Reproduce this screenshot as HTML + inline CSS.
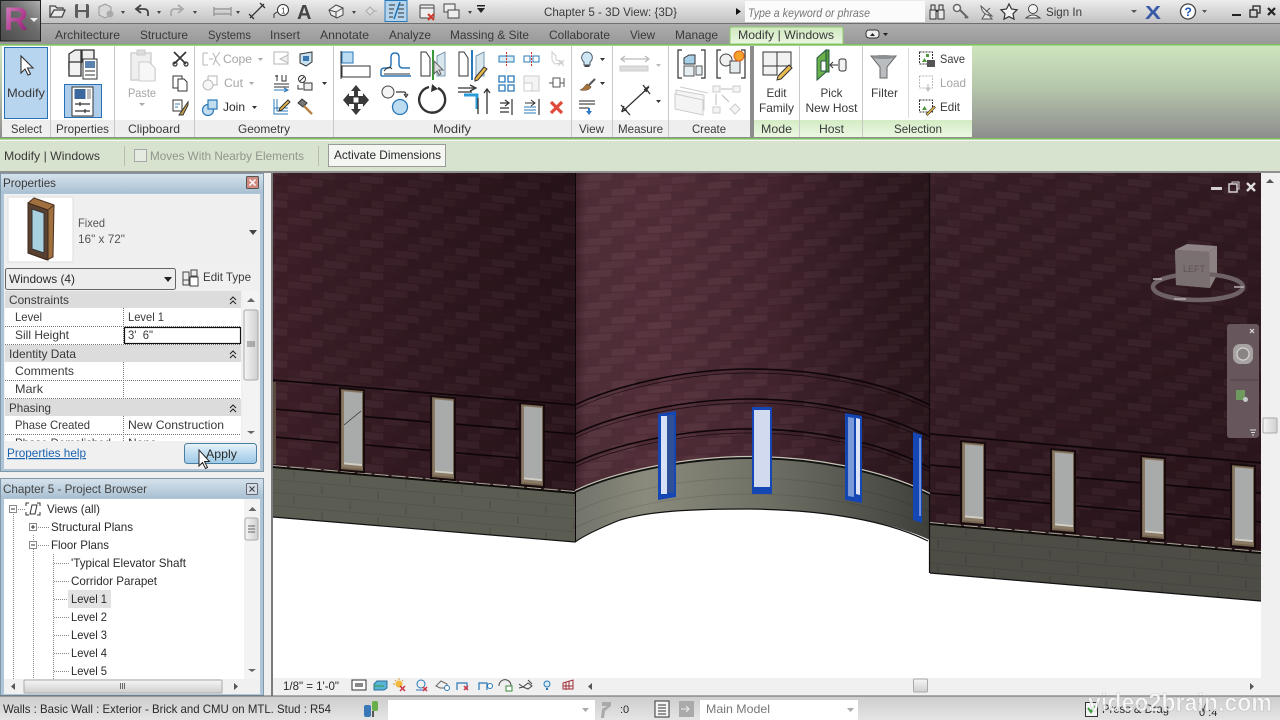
<!DOCTYPE html>
<html><head><meta charset="utf-8"><title>Revit</title>
<style>
html,body{margin:0;padding:0;background:#f0f0f0;width:1280px;height:720px;overflow:hidden}
svg{display:block;position:absolute;left:0;top:0}
text{font-family:"Liberation Sans",sans-serif;font-size:12px;fill:#3a3a3a}
.g{fill:#a5a5a5}
.m{text-anchor:middle}
.d{fill:#2a2a2a}
.q{fill:none;stroke:#b5b5b5;stroke-width:1}
</style></head><body>
<svg width="1280" height="720" viewBox="0 0 1280 720" xmlns="http://www.w3.org/2000/svg">
<defs>
<linearGradient id="gt" x1="0" y1="0" x2="0" y2="1"><stop offset="0" stop-color="#ececec"/><stop offset="1" stop-color="#c2c2c2"/></linearGradient>
<linearGradient id="gtab" x1="0" y1="0" x2="0" y2="1"><stop offset="0" stop-color="#adadad"/><stop offset="1" stop-color="#989898"/></linearGradient>
<linearGradient id="gctx" x1="0" y1="0" x2="0" y2="1"><stop offset="0" stop-color="#cfe8bf"/><stop offset="1" stop-color="#eaf6e0"/></linearGradient>
<linearGradient id="grib" x1="0" y1="0" x2="0" y2="1"><stop offset="0" stop-color="#cfe6bf"/><stop offset=".45" stop-color="#b6c7ab"/><stop offset="1" stop-color="#8c8c8c"/></linearGradient>
<linearGradient id="glab" x1="0" y1="0" x2="0" y2="1"><stop offset="0" stop-color="#ededed"/><stop offset="1" stop-color="#f0f0f0"/></linearGradient>
<linearGradient id="glabg" x1="0" y1="0" x2="0" y2="1"><stop offset="0" stop-color="#d3ecc4"/><stop offset="1" stop-color="#ecf7e3"/></linearGradient>
<linearGradient id="gpt" x1="0" y1="0" x2="0" y2="1"><stop offset="0" stop-color="#d5e2ec"/><stop offset="1" stop-color="#a9c0d2"/></linearGradient>
<linearGradient id="gapply" x1="0" y1="0" x2="0" y2="1"><stop offset="0" stop-color="#eaf4fb"/><stop offset=".5" stop-color="#bfdcf0"/><stop offset="1" stop-color="#9dc8e6"/></linearGradient>
<linearGradient id="gst" x1="0" y1="0" x2="0" y2="1"><stop offset="0" stop-color="#cdcdcd"/><stop offset="1" stop-color="#e4e4e4"/></linearGradient>
<linearGradient id="gbar" x1="0" y1="0" x2="1" y2="0"><stop offset="0" stop-color="#f5f5f5"/><stop offset="1" stop-color="#cfcfcf"/></linearGradient>
<linearGradient id="ghb" x1="0" y1="0" x2="0" y2="1"><stop offset="0" stop-color="#f5f5f5"/><stop offset="1" stop-color="#cfcfcf"/></linearGradient>
<linearGradient id="gapp" x1="0" y1="1" x2="1" y2="0"><stop offset="0" stop-color="#4a4a4a"/><stop offset=".6" stop-color="#6e6e6e"/><stop offset="1" stop-color="#b0b0b0"/></linearGradient>
<linearGradient id="gr" x1="0" y1="0" x2="1" y2="1"><stop offset="0" stop-color="#d88cc4"/><stop offset=".6" stop-color="#b03c90"/><stop offset="1" stop-color="#7c2068"/></linearGradient>
<linearGradient id="gcurve" x1="575" y1="0" x2="930" y2="0" gradientUnits="userSpaceOnUse"><stop offset="0" stop-color="#3e2029"/><stop offset=".03" stop-color="#52303a"/><stop offset=".22" stop-color="#55303b"/><stop offset=".5" stop-color="#482832"/><stop offset=".8" stop-color="#341b24"/><stop offset="1" stop-color="#2a161c"/></linearGradient>
<linearGradient id="gcbase" x1="575" y1="0" x2="930" y2="0" gradientUnits="userSpaceOnUse"><stop offset="0" stop-color="#72736a"/><stop offset=".2" stop-color="#8a8b7c"/><stop offset=".55" stop-color="#6e6f64"/><stop offset="1" stop-color="#3f403a"/></linearGradient>
<linearGradient id="gleft" x1="273" y1="0" x2="575" y2="0" gradientUnits="userSpaceOnUse"><stop offset="0" stop-color="#3e2029"/><stop offset="1" stop-color="#28131a"/></linearGradient>
<linearGradient id="gright" x1="930" y1="173" x2="1261" y2="540" gradientUnits="userSpaceOnUse"><stop offset="0" stop-color="#3b2029"/><stop offset="1" stop-color="#2a141b"/></linearGradient>
<g id="bk">
<rect x="0" y="0" width="23" height="7" fill="#fff" opacity=".025"/>
<rect x="24" y="0" width="23" height="7" fill="#000" opacity=".07"/>
<rect x="48" y="0" width="23" height="7" fill="#fff" opacity=".015"/>
<rect x="72" y="0" width="23" height="7" fill="#000" opacity=".04"/>
<rect x="12" y="8" width="23" height="7" fill="#000" opacity=".05"/>
<rect x="36" y="8" width="23" height="7" fill="#fff" opacity=".03"/>
<rect x="60" y="8" width="23" height="7" fill="#000" opacity=".08"/>
<rect x="84" y="8" width="12" height="7" fill="#fff" opacity=".02"/>
<rect x="0" y="16" width="23" height="7" fill="#000" opacity=".06"/>
<rect x="24" y="16" width="23" height="7" fill="#fff" opacity=".02"/>
<rect x="48" y="16" width="23" height="7" fill="#000" opacity=".04"/>
<rect x="72" y="16" width="23" height="7" fill="#fff" opacity=".035"/>
<rect x="12" y="24" width="23" height="7" fill="#fff" opacity=".03"/>
<rect x="36" y="24" width="23" height="7" fill="#000" opacity=".06"/>
<rect x="60" y="24" width="23" height="7" fill="#fff" opacity=".02"/>
<rect x="84" y="24" width="12" height="7" fill="#000" opacity=".05"/>
<path d="M0 7.500H96M0 15.500H96M0 23.500H96M0 31.500H96" stroke="#000" stroke-opacity=".08"/>
</g>
<pattern id="brick" width="96" height="32" patternUnits="userSpaceOnUse" patternTransform="skewY(5)"><use href="#bk"/></pattern>
<pattern id="brick2" width="96" height="32" patternUnits="userSpaceOnUse" patternTransform="skewY(-4)"><use href="#bk"/></pattern>
<pattern id="cmu" width="56" height="26" patternUnits="userSpaceOnUse" patternTransform="skewY(5)">
<path d="M0 .5H56M0 13.5H56" stroke="#000" stroke-opacity=".1" fill="none"/>
<path d="M14 3V11M42 16V24" stroke="#000" stroke-opacity=".18" fill="none"/>
</pattern>
<g id="win">
<rect x="0" y="0" width="26" height="84" fill="#170a0d"/>
<rect x="2" y="2" width="22" height="80" fill="#75644f"/>
<rect x="3" y="3" width="20" height="77" fill="#8a7a66"/>
<rect x="5" y="4" width="18" height="71" fill="#a9aaaa"/>
<rect x="5" y="75" width="18" height="2" fill="#d0d0c8"/>
</g>
<clipPath id="tb"><rect x="5" y="434" width="236" height="7"/></clipPath>
</defs>

<rect width="1280" height="720" fill="#f0f0f0"/>

<!-- TITLE BAR -->
<rect width="1280" height="23" fill="url(#gt)"/>
<rect y="23" width="1280" height="1" fill="#6f6f6f"/>
<rect y="24" width="1280" height="20" fill="url(#gtab)"/>

<!-- Tabs -->
<path d="M730 44V29q0-2 2-2H841q2 0 2 2V44Z" fill="url(#gctx)" stroke="#8fcc6e"/>
<text x="55" y="39" textLength="65" lengthAdjust="spacingAndGlyphs">Architecture</text>
<text x="140" y="39" textLength="48" lengthAdjust="spacingAndGlyphs">Structure</text>
<text x="208" y="39" textLength="43" lengthAdjust="spacingAndGlyphs">Systems</text>
<text x="270" y="39" textLength="30" lengthAdjust="spacingAndGlyphs">Insert</text>
<text x="320" y="39" textLength="49" lengthAdjust="spacingAndGlyphs">Annotate</text>
<text x="389" y="39" textLength="42" lengthAdjust="spacingAndGlyphs">Analyze</text>
<text x="450" y="39" textLength="79" lengthAdjust="spacingAndGlyphs">Massing &amp; Site</text>
<text x="549" y="39" textLength="61" lengthAdjust="spacingAndGlyphs">Collaborate</text>
<text x="630" y="39" textLength="25" lengthAdjust="spacingAndGlyphs">View</text>
<text x="675" y="39" textLength="43" lengthAdjust="spacingAndGlyphs">Manage</text>
<text x="738" y="39" textLength="96" lengthAdjust="spacingAndGlyphs">Modify | Windows</text>
<rect x="866" y="30" width="13" height="8" rx="3" fill="#eee" stroke="#333"/><path d="M870 36l2.500-3 2.500 3z" fill="#222"/><path d="M883 33h5l-2.500 3z" fill="#222"/>

<!-- Title -->
<text x="544" y="16" textLength="133" lengthAdjust="spacingAndGlyphs">Chapter 5 - 3D View: {3D}</text>
<path d="M736 8v7l5-3.500z" fill="#111"/>
<rect x="745" y="1" width="180" height="21" fill="#fbfbfb"/>
<text x="748" y="17" font-style="italic" style="fill:#777" textLength="122" lengthAdjust="spacingAndGlyphs">Type a keyword or phrase</text>

<!-- App button -->
<rect x="0.500" y="0.500" width="40" height="40.500" fill="url(#gapp)" stroke="#222"/>
<text x="4" y="30" style="font-size:32px;font-weight:bold;font-family:'Liberation Sans',sans-serif;fill:url(#gr)" textLength="24" lengthAdjust="spacingAndGlyphs">R</text>
<path d="M30 18h8l-4 4z" fill="#eee"/>

<!-- QAT icons -->
<path d="M50 17V6h5l2 2h6v2M50 17l4-7h11l-3 7Z" fill="#e8e8e8" stroke="#444" stroke-width="1.300"/>
<rect x="75" y="4" width="14" height="14" rx="2" fill="#5c5c5c"/><rect x="78" y="4" width="8" height="6" fill="#ddd"/><rect x="78" y="12" width="8" height="6" fill="#ccc"/>
<path d="M99 7l6-3 6 3v8l-6 3-6-3z" fill="#d8d8d8" stroke="#999"/><circle cx="110" cy="14" r="3.500" fill="#aaa"/>
<path d="M121 11h4l-2 3z M157 11h4l-2 3z M193 11h4l-2 3z M236 11h4l-2 3z M352 11h4l-2 3z" fill="#444"/>
<path d="M148 16v-3q0-4-4-4h-7M141 5l-5 4 5 4" fill="none" stroke="#444" stroke-width="1.800"/>
<path d="M171 16v-3q0-4 4-4h7M178 5l5 4-5 4" fill="none" stroke="#aaa" stroke-width="1.800"/>
<path d="M214 7v9M231 7v9M214 9h17M214 14h17" stroke="#999" stroke-width="1.500" fill="none"/><rect x="216" y="11" width="13" height="2" fill="#ccc"/>
<path d="M250 18l14-14M249 14l5 5M260 3l5 5" stroke="#333" stroke-width="1.300" fill="none"/>
<path d="M274 18v-4l5-3" stroke="#333" fill="none"/><circle cx="283" cy="10" r="5.500" fill="#fff" stroke="#333"/><text x="281" y="13.500" style="font-size:8px">1</text>
<text x="297" y="19" style="font-size:20px;font-weight:bold;fill:#444">A</text>
<path d="M329 10l7-5 7 3v7l-6 3-6-3z" fill="#eee" stroke="#444"/>
<path d="M329 10l7 2 7-4M336 12v6" stroke="#444" fill="none"/>
<path d="M366 11l4-4 4 4-4 4z" fill="#ddd" stroke="#aaa"/><path d="M374 11h3" stroke="#aaa"/>
<rect x="385" y="0.500" width="22" height="21" fill="#b4d3ed" stroke="#2a78b8"/>
<path d="M389 5h6M389 9h5M389 13h4M389 17h4M398 5h6M398 9h6M398 13h6M398 17h6" stroke="#333"/><path d="M394 19l6-17" stroke="#1a6fb0" stroke-width="1.400"/>
<rect x="420" y="5" width="14" height="13" rx="1" fill="#eee" stroke="#444"/><path d="M420 8h14" stroke="#444"/><path d="M428 14l6 6M434 14l-6 6" stroke="#d0382a" stroke-width="2"/>
<rect x="444" y="4" width="11" height="8" fill="#eee" stroke="#444"/><rect x="448" y="10" width="11" height="8" fill="#eee" stroke="#444"/><path d="M468 11h4l-2 3z" fill="#444"/>
<path d="M477 5h8v1.500h-8zM477 8h8l-4 5z" fill="#222"/>

<!-- Right title icons -->
<rect x="931" y="5" width="4" height="5" fill="#ddd" stroke="#333"/><rect x="939" y="5" width="4" height="5" fill="#ddd" stroke="#333"/>
<path d="M930 10h6v9h-6zM938 10h6v9h-6z" fill="#e8e8e8" stroke="#333"/><path d="M936 11h2" stroke="#333" stroke-width="2"/>
<circle cx="957" cy="8" r="3.500" fill="#eee" stroke="#666" stroke-width="1.500"/><path d="M960 10l8 8M965 18l2-2" stroke="#666" stroke-width="2"/>
<path d="M981 6q1 9 11 10zM986 12l4-4M985 14l-3 5h10l-4-5" fill="#e4e4e4" stroke="#555"/>
<path d="M1009 4l2.500 5 5.500.8-4 3.900 1 5.500-5-2.600-5 2.600 1-5.500-4-3.900 5.500-.8z" fill="#f2f2f2" stroke="#333" stroke-width="1.200"/>
<circle cx="1033" cy="9" r="4.500" fill="#f2f2f2" stroke="#444"/><path d="M1026 18q7-6 14 0z" fill="#f2f2f2" stroke="#444"/>
<text x="1046" y="16" textLength="36" lengthAdjust="spacingAndGlyphs">Sign In</text>
<path d="M1131 10h6l-3 3z" fill="#555"/>
<text x="1145" y="19" style="font-size:18px;font-weight:bold;fill:#3a5aa8" textLength="16" lengthAdjust="spacingAndGlyphs">X</text>
<circle cx="1188" cy="11.500" r="7.500" fill="#fff" stroke="#444" stroke-width="1.300"/>
<text x="1184.500" y="16" style="font-size:12px;font-weight:bold;fill:#1a55b0">?</text>
<path d="M1202 10h5l-2.500 3z" fill="#555"/>
<rect x="1232" y="14" width="9" height="2" fill="#222"/>
<rect x="1250" y="10" width="7" height="7" fill="none" stroke="#222" stroke-width="1.300"/><path d="M1253 10V6h7v7h-3" fill="none" stroke="#222" stroke-width="1.300"/>
<path d="M1268 8l7 7M1275 8l-7 7" stroke="#222" stroke-width="2.200"/>

<!-- RIBBON -->
<rect x="0" y="44" width="1280" height="95" fill="url(#grib)"/>
<rect x="0" y="44" width="1280" height="1.500" fill="#7cc15c"/>
<rect x="2" y="46" width="748" height="74" fill="#fff"/>
<rect x="2" y="120" width="748" height="17" fill="url(#glab)"/>
<rect x="750" y="46" width="4" height="91" fill="#8c8c8c"/>
<rect x="754" y="46" width="218" height="74" fill="#fff"/>
<rect x="754" y="120" width="218" height="17" fill="url(#glabg)"/>
<rect x="0" y="138" width="1280" height="1.500" fill="#7cc15c"/>
<path d="M50.500 46V137M114.500 46V137M194.500 46V137M333.500 46V137M571.500 46V137M612.500 46V137M668.500 46V137M799.500 46V137M862.500 46V137" stroke="#c8c8c8"/>
<path d="M908.500 48V118" stroke="#ddd"/>

<!-- panel labels -->
<text x="26.500" y="133" class="m" textLength="31" lengthAdjust="spacingAndGlyphs">Select</text>
<text x="82.500" y="133" class="m" textLength="53" lengthAdjust="spacingAndGlyphs">Properties</text>
<text x="154" y="133" class="m" textLength="52" lengthAdjust="spacingAndGlyphs">Clipboard</text>
<text x="264" y="133" class="m" textLength="52" lengthAdjust="spacingAndGlyphs">Geometry</text>
<text x="452" y="133" class="m" textLength="38" lengthAdjust="spacingAndGlyphs">Modify</text>
<text x="591.500" y="133" class="m" textLength="25" lengthAdjust="spacingAndGlyphs">View</text>
<text x="640.500" y="133" class="m" textLength="45" lengthAdjust="spacingAndGlyphs">Measure</text>
<text x="709" y="133" class="m" textLength="34" lengthAdjust="spacingAndGlyphs">Create</text>
<text x="776.500" y="133" class="m" textLength="31" lengthAdjust="spacingAndGlyphs">Mode</text>
<text x="831.500" y="133" class="m" textLength="25" lengthAdjust="spacingAndGlyphs">Host</text>
<text x="918" y="133" class="m" textLength="48" lengthAdjust="spacingAndGlyphs">Selection</text>

<!-- Select -->
<rect x="4.500" y="47.500" width="43" height="71" fill="#b8d5ef" stroke="#2a70b5"/>
<path d="M21 56v17l4-4 3 6 2.500-1-3-6h5.500z" fill="#fff" stroke="#333" stroke-width="1.100"/>
<text x="7" y="97" textLength="38" lengthAdjust="spacingAndGlyphs">Modify</text>

<!-- Properties icons -->
<path d="M69 54l6-4h6v14h-6l-6 4z M82 50h12v12h-12z" fill="#eee" stroke="#333" stroke-width="1.300"/>
<path d="M69 62h12v14H69z" fill="#f3f3f3" stroke="#333" stroke-width="1.300"/>
<rect x="83" y="59" width="14" height="20" fill="#fff" stroke="#333"/><rect x="85" y="61" width="10" height="7" fill="#5b83b0"/><path d="M85 71h10M85 75h10" stroke="#333"/>
<rect x="64.500" y="84.500" width="37" height="33" fill="#aecdea" stroke="#2a70b5"/>
<rect x="72" y="87" width="21" height="29" fill="#fff" stroke="#333"/><rect x="74.500" y="89" width="11" height="10" fill="#3a689c"/><rect x="87" y="89" width="4" height="10" fill="#bbb"/>
<path d="M75 104h15M75 111h15M80 102v4M85 109v4" stroke="#333" stroke-width="1.200"/>

<!-- Clipboard -->
<path d="M131 53h20v12l4 4v11h-24z" fill="#efefef" stroke="#d0d0d0" stroke-width="1.500"/><rect x="137" y="50" width="8" height="5" fill="#ddd" stroke="#ccc"/><path d="M139 62h10l6 6v13h-16z" fill="#f7f7f7" stroke="#ccc"/>
<text x="128" y="97" class="g" textLength="28" lengthAdjust="spacingAndGlyphs">Paste</text>
<path d="M139 103h6l-3 3z" fill="#aaa"/>
<path d="M174 52l12 12M186 52l-12 12" stroke="#333" stroke-width="1.600"/><circle cx="175" cy="64" r="2" fill="none" stroke="#333" stroke-width="1.200"/><circle cx="186" cy="64" r="2" fill="none" stroke="#333" stroke-width="1.200"/>
<rect x="173" y="76" width="9" height="12" fill="#fff" stroke="#333"/><path d="M178 79h6l3 3v9h-9z" fill="#fff" stroke="#333"/>
<rect x="173" y="100" width="9" height="11" fill="#fff" stroke="#333"/><path d="M175 104h5M175 107h3" stroke="#3a78b0"/><path d="M179 115l9-13 0 3-5 10z" fill="#c8a04a" stroke="#333"/>

<!-- Geometry -->
<path d="M203 53v12M203 53h5M203 65h5M209 59h4M213 53l3 6-3 6M220 52l-5 7 5 7" class="q"/>
<text x="223" y="63" class="g" textLength="29" lengthAdjust="spacingAndGlyphs">Cope</text><path d="M258 58h5l-2.500 3z" fill="#aaa"/>
<circle cx="208" cy="85" r="5" fill="#f6f6f6" stroke="#bbb"/><path d="M208 76h9v9h-4" class="q"/><path d="M208 80v-4" class="q"/>
<text x="224" y="87" class="g" textLength="19" lengthAdjust="spacingAndGlyphs">Cut</text><path d="M249 82h5l-2.500 3z" fill="#aaa"/>
<circle cx="208" cy="110" r="5.500" fill="#c2ddf0" stroke="#2a78b8" stroke-width="1.200"/><rect x="208" y="100" width="9" height="9" fill="#c2ddf0" stroke="#2a78b8" stroke-width="1.200"/>
<text x="223" y="111" class="d" textLength="22" lengthAdjust="spacingAndGlyphs">Join</text><path d="M252 106h5l-2.500 3z" fill="#333"/>
<path d="M274 52h14v12h-14z" class="q"/><path d="M288 55l-8 4 8 4z" fill="#eee" stroke="#bbb"/>
<path d="M300 54l12-2v10l-6 4-6-3z" fill="#c9e0f0" stroke="#333"/><rect x="303" y="56" width="6" height="5" fill="#3a78b0"/>
<path d="M275 76h3M277 75v6M282 75v6h4v-6M286 75v6M274 84h15M274 87h15" stroke="#333" fill="none"/><path d="M274 90h14M284 88l4 2-4 2" stroke="#2a78b8" fill="none"/>
<circle cx="302" cy="79" r="3.500" fill="none" stroke="#333"/><path d="M300 81l4-4" stroke="#333"/><rect x="304" y="83" width="8" height="7" fill="#eee" stroke="#333"/><path d="M298 85v4h5" fill="none" stroke="#333"/><path d="M322 82h5l-2.500 3z" fill="#333"/>
<path d="M274 99v15h14M277 99v12h11M274 108h14" stroke="#2a78b8" fill="none"/><path d="M280 108l8-8 2 2-8 8-3 1z" fill="#e8b94a" stroke="#333"/>
<path d="M298 103l4-4 5 4-4 4z" fill="#777" stroke="#333"/><path d="M304 106l8 8" stroke="#b8834a" stroke-width="2.500"/>

<!-- Modify panel -->
<rect x="342" y="52" width="11" height="11" fill="#bcdcf2" stroke="#2a78b8"/><rect x="342" y="66" width="28" height="11" fill="#fff" stroke="#333"/><path d="M341 51v28" stroke="#333"/>
<path d="M381 76v-5q0-3 4-3h3q3 0 3-4v-7q0-4 4-4t4 4v7q0 4 4 4h7M381 76h30" fill="none" stroke="#2a78b8" stroke-width="1.500"/><path d="M384 74h26M384 71q5-6 8-2" fill="none" stroke="#333"/>
<path d="M421 52h5l4 6v18h-9z" fill="#fff" stroke="#333"/><path d="M433 50v30" stroke="#3a9a3a" stroke-width="2"/><path d="M437 56l8-4v24h-8z" fill="#d8e6ee" stroke="#7a9ab0"/>
<path d="M434 61v13l3-3 2 4 2-1-2-4h4z" fill="#ddd" stroke="#666"/>
<path d="M459 52h5l4 6v18h-9z" fill="#fff" stroke="#333"/><path d="M472 50v30" stroke="#2a78b8" stroke-width="2"/><path d="M476 56l8-4v24h-8z" fill="#d8e6ee" stroke="#7a9ab0"/><path d="M475 78l9-11 3 2-9 11-3 1z" fill="#e8b94a" stroke="#333"/>
<path d="M356 85l5 6h-3v5h5v-3l6 7-6 7v-3h-5v5h3l-5 6-5-6h3v-5h-5v3l-6-7 6-7v3h5v-5h-3z" fill="#3a3a3a"/><rect x="353" y="97" width="6" height="6" fill="#fff" stroke="#333"/>
<circle cx="388" cy="92" r="6" fill="#f4f4f4" stroke="#444"/><circle cx="400" cy="107" r="7.500" fill="#bcdcf2" stroke="#2a78b8" stroke-width="1.300"/><path d="M396 92h8q2 0 2 3M404 94l2 3 2-3" fill="none" stroke="#333" stroke-width="1.200"/>
<path d="M429 87a13 13 0 1 0 9 1" fill="none" stroke="#333" stroke-width="2.400"/><path d="M432 84l6 5-7 3z" fill="#333"/>
<path d="M458 88h16M458 92h14M470 85l6 3-6 3" fill="none" stroke="#333" stroke-width="1.300"/><path d="M464 95h13v14" fill="none" stroke="#2a9ad8" stroke-width="3"/><path d="M478 114V98M487 114V90M484 93l3-4 3 4" fill="none" stroke="#333" stroke-width="1.300"/>
<path d="M499 56h15v6h-15z" fill="#d8ecf8" stroke="#2a78b8"/><path d="M506.500 52v14" stroke="#c33" stroke-dasharray="2 1"/>
<rect x="524" y="56" width="6" height="6" fill="#fff" stroke="#2a78b8"/><rect x="533" y="56" width="6" height="6" fill="#fff" stroke="#2a78b8"/><path d="M531.500 52v14" stroke="#c33" stroke-dasharray="2 1"/>
<path d="M552 52l4 4v4l5 1 2 2-8 1-3-4zM558 60l6 6M564 60l-6 6" fill="none" stroke="#ccc"/>
<path d="M499 76h6v6h-6zM508 76h6v6h-6zM499 85h6v6h-6zM508 85h6v6h-6z" fill="#fff" stroke="#2a78b8" stroke-width="1.300"/>
<rect x="524" y="76" width="15" height="15" fill="#f4f4f4" stroke="#ccc"/><rect x="524" y="83" width="8" height="8" fill="#fff" stroke="#ccc"/>
<rect x="553" y="78" width="7" height="9" fill="#fff" stroke="#555"/><path d="M549 83h4M560 83h4M564 78v9" stroke="#555"/>
<path d="M500 103h9M505 100l4 3-4 3M500 108h9M500 112h9M512 99v16" fill="none" stroke="#333" stroke-width="1.200"/>
<path d="M525 103h10M531 100l4 3-4 3" fill="none" stroke="#333"/><path d="M524 107h12M524 110h12M524 113h12" stroke="#2a78b8"/><path d="M539 99v16" stroke="#333" stroke-width="1.200"/>
<path d="M551 102l11 11M562 102l-11 11" stroke="#e04a3a" stroke-width="3.200"/>

<!-- View -->
<path d="M587 52a5.500 5.500 0 0 1 3 10v3h-6v-3a5.500 5.500 0 0 1 3-10z" fill="#cfe6f5" stroke="#456"/><rect x="584.500" y="65" width="5" height="2" fill="#444"/>
<path d="M600 58h5l-2.500 3z M600 82h5l-2.500 3z" fill="#333"/>
<path d="M580 90c4-1 5-5 7-6l4 3c-2 3-5 4-11 3z" fill="#a8763e" stroke="#5a3a1a" stroke-width=".6"/><path d="M589 85l6-6" stroke="#555" stroke-width="2"/>
<path d="M579 101h16M579 104h16M579 108h10" stroke="#222"/><path d="M588 108v3h-2l3 4 3-4h-2v-3z" fill="#2a78c8"/>

<!-- Measure -->
<path d="M621 59h28M625 56l-4 3 4 3M645 56l4 3-4 3" fill="none" stroke="#bbb" stroke-width="1.200"/><rect x="620" y="66" width="28" height="5" fill="#ddd" stroke="#ccc"/><path d="M656 64h5l-2.500 3z" fill="#bbb"/>
<path d="M622 112l27-25M621 105l9 10M643 85l7 9M624 106l-2 5 5-1M644 90l4-3-2 5" fill="none" stroke="#333" stroke-width="1.300"/><path d="M656 100h5l-2.500 3z" fill="#333"/>

<!-- Create -->
<path d="M682 50h-4v28h4M701 50h4v28h-4" fill="none" stroke="#333" stroke-width="1.200"/>
<path d="M684 58l5-3h6v9h-11z" fill="#a8d0ea" stroke="#333"/><rect x="684" y="66" width="10" height="10" fill="#e6eef2" stroke="#555"/><rect x="696" y="66" width="6" height="9" fill="#e6eef2" stroke="#555"/>
<path d="M721 50h-4v28h4M741 50h4v28h-4" fill="none" stroke="#333" stroke-width="1.200"/><circle cx="726" cy="60" r="6" fill="#f0f0f0" stroke="#444"/><rect x="730" y="61" width="10" height="12" fill="#e4e9ec" stroke="#444"/><circle cx="739" cy="56" r="5" fill="#f5a32a" stroke="#e25a1a"/>
<path d="M676 90l28 5v15l-28-6zM680 87l28 6" fill="#f4f4f4" stroke="#ccc"/><path d="M675 94l28 6v15l-28-6z" fill="#f4f4f4" stroke="#ccc"/>
<path d="M713 86h7v6h-7zM733 86h7v6h-7zM713 107h7v6h-7zM735 104l5 5-5 5-5-5z" fill="#f4f4f4" stroke="#ccc"/><path d="M721 89h11M716 94v11M722 95l7 7" stroke="#bbb"/>

<!-- Edit Family -->
<rect x="763" y="52" width="14" height="23" fill="#f2f2f2" stroke="#333"/><rect x="777" y="52" width="14" height="14" fill="#f2f2f2" stroke="#333"/><path d="M763 66h14" stroke="#333"/><path d="M778 76l11-11 3 3-11 11-4 1z" fill="#eabc52" stroke="#333"/>
<text x="776.500" y="97" class="m" textLength="20" lengthAdjust="spacingAndGlyphs">Edit</text>
<text x="776.500" y="112" class="m" textLength="35" lengthAdjust="spacingAndGlyphs">Family</text>
<!-- Pick New Host -->
<path d="M817 58l9-8v22l-9 8z" fill="#6bb04a" stroke="#254"/><path d="M826 50h3v22h-3z" fill="#5a9a3c" stroke="#254"/><rect x="821" y="61" width="5" height="10" fill="#fff" stroke="#254"/>
<path d="M831 65h7M833 62l-3 3 3 3" fill="none" stroke="#333"/><rect x="839" y="59" width="7" height="12" rx="2" fill="#f2f2f2" stroke="#333"/>
<text x="831.500" y="97" class="m" textLength="22" lengthAdjust="spacingAndGlyphs">Pick</text>
<text x="831.500" y="112" class="m" textLength="52" lengthAdjust="spacingAndGlyphs">New Host</text>
<!-- Filter -->
<path d="M871 56h25l-9 11v11h-7V67z" fill="#b9bdc0" stroke="#666"/><ellipse cx="883.500" cy="57" rx="12" ry="2" fill="#8a8e90"/>
<text x="871" y="97" textLength="27" lengthAdjust="spacingAndGlyphs">Filter</text>
<!-- Selection -->
<rect x="919.500" y="52" width="13" height="12" fill="#fff" stroke="#333" stroke-dasharray="2 1"/><path d="M922 62l2.500-4 2.500 4z" fill="#4a9a3a"/><rect x="926" y="54" width="3" height="3" fill="#4a9a3a"/><rect x="927" y="60" width="8" height="7" fill="#555"/>
<text x="940" y="63" textLength="25" lengthAdjust="spacingAndGlyphs">Save</text>
<rect x="919.500" y="76" width="13" height="12" fill="#fff" stroke="#bbb" stroke-dasharray="2 1"/><path d="M928 84v6M926 88l2 3 2-3" stroke="#bbb" fill="none"/>
<text x="940" y="87" class="g" textLength="26" lengthAdjust="spacingAndGlyphs">Load</text>
<rect x="919.500" y="100" width="13" height="12" fill="#fff" stroke="#333" stroke-dasharray="2 1"/><path d="M922 110l2.500-4 2.500 4z" fill="#4a9a3a"/><path d="M926 114l8-8 1.500 1.500-8 8z" fill="#e8b94a" stroke="#333" stroke-width=".6"/>
<text x="940" y="111" textLength="20" lengthAdjust="spacingAndGlyphs">Edit</text>

<!-- Options bar -->
<rect x="0" y="140" width="1280" height="1" fill="#f6f6f6"/>
<rect x="0" y="141" width="1280" height="30" fill="#d8e3cf"/>
<rect x="0" y="171" width="1280" height="2" fill="#8f8f8f"/>
<text x="4" y="160" textLength="96" lengthAdjust="spacingAndGlyphs">Modify | Windows</text>
<path d="M124.500 146v20M318.500 146v20" stroke="#b4bdae"/>
<rect x="134.500" y="149.500" width="12" height="12" fill="#e6ebe2" stroke="#a8a8a8"/>
<text x="150" y="160" style="fill:#8f958c" textLength="154" lengthAdjust="spacingAndGlyphs">Moves With Nearby Elements</text>
<rect x="328.500" y="144.500" width="117" height="22" fill="#f4f6f2" stroke="#9a9a9a"/>
<text x="334" y="159" class="d" textLength="107" lengthAdjust="spacingAndGlyphs">Activate Dimensions</text>

<!-- Left column -->
<rect x="0" y="173" width="272" height="523" fill="#f0f0f0"/>

<!-- PROPERTIES -->
<rect x="0.500" y="173.500" width="263" height="298" fill="#aec5d7" stroke="#7f98aa"/>
<rect x="1" y="174" width="262" height="19" fill="url(#gpt)"/>
<text x="3" y="187" textLength="53" lengthAdjust="spacingAndGlyphs">Properties</text>
<rect x="246.500" y="176.500" width="12" height="12" rx="1" fill="#d08a80" stroke="#555"/><path d="M249.500 179.500l6 6M255.500 179.500l-6 6" stroke="#fff" stroke-width="1.500"/>
<rect x="4" y="194" width="256" height="275" fill="#f0f0f0"/>
<rect x="5" y="195" width="254" height="69" fill="#efefef"/>
<rect x="8" y="197" width="65" height="65" fill="#fff" stroke="#ddd"/>
<path d="M28 203l6-5 20 7-1 52-6 3-19-7z" fill="#a0703f" stroke="#4a3020"/>
<path d="M28 203l20 7v50l-20-7z" fill="#5a4030" stroke="#3a2818"/>
<path d="M32 209l12 4v40l-12-4z" fill="#a9d0e0" stroke="#333"/>
<path d="M48 210l6-5" stroke="#4a3020"/>
<text x="78" y="227" textLength="27" lengthAdjust="spacingAndGlyphs" style="fill:#555">Fixed</text>
<text x="78" y="243" textLength="47" lengthAdjust="spacingAndGlyphs" style="fill:#555">16" x 72"</text>
<path d="M249 230h8l-4 5z" fill="#444"/>
<rect x="5.500" y="268.500" width="170" height="21" rx="2" fill="#ededed" stroke="#666"/>
<text x="9" y="283" class="d" textLength="66" lengthAdjust="spacingAndGlyphs">Windows (4)</text>
<path d="M164 277h8l-4 5z" fill="#222"/>
<path d="M183 272h6v8h-6zM191 270h6v6h-6zM183 280h6v5h-6z" fill="#eee" stroke="#444"/><rect x="190" y="277" width="8" height="9" fill="#fff" stroke="#444"/>
<text x="203" y="281" textLength="48" lengthAdjust="spacingAndGlyphs">Edit Type</text>

<!-- property table -->
<rect x="5" y="291" width="236" height="150" fill="#fff"/>
<rect x="5" y="291" width="236" height="17" fill="#dcdcdc"/>
<rect x="5" y="345" width="236" height="17" fill="#dcdcdc"/>
<rect x="5" y="399" width="236" height="17" fill="#dcdcdc"/>
<path d="M5 326.500H241M5 344.500H241M5 380.500H241M5 398.500H241M5 434.500H241M123.500 308V344M123.500 362V398M123.500 416V441" stroke="#777" stroke-dasharray="1 1"/>
<text x="9" y="304" textLength="60" lengthAdjust="spacingAndGlyphs">Constraints</text>
<text x="15" y="321" textLength="27" lengthAdjust="spacingAndGlyphs">Level</text>
<text x="128" y="321" textLength="36" lengthAdjust="spacingAndGlyphs">Level 1</text>
<text x="15" y="339" textLength="54" lengthAdjust="spacingAndGlyphs">Sill Height</text>
<rect x="124.500" y="327.500" width="116" height="16" fill="#fff" stroke="#111" stroke-width="1.200"/>
<text x="128" y="339" textLength="25" lengthAdjust="spacingAndGlyphs">3'&#160;&#160;6"</text>
<text x="9" y="358" textLength="67" lengthAdjust="spacingAndGlyphs">Identity Data</text>
<text x="15" y="375" textLength="59" lengthAdjust="spacingAndGlyphs">Comments</text>
<text x="15" y="393" textLength="28" lengthAdjust="spacingAndGlyphs">Mark</text>
<text x="9" y="412" textLength="42" lengthAdjust="spacingAndGlyphs">Phasing</text>
<text x="15" y="429" textLength="75" lengthAdjust="spacingAndGlyphs">Phase Created</text>
<text x="128" y="429" textLength="96" lengthAdjust="spacingAndGlyphs">New Construction</text>
<g clip-path="url(#tb)"><text x="15" y="447" textLength="96" lengthAdjust="spacingAndGlyphs">Phase Demolished</text><text x="128" y="447">None</text></g>
<path d="M230 300l3-3 3 3M230 304l3-3 3 3M230 354l3-3 3 3M230 358l3-3 3 3M230 408l3-3 3 3M230 412l3-3 3 3" fill="none" stroke="#222"/>
<rect x="243" y="291" width="16" height="150" fill="#f3f3f3"/>
<path d="M247 302l4-4 4 4z" fill="#666"/>
<rect x="244" y="310" width="14" height="70" rx="2" fill="url(#gbar)" stroke="#a8a8a8"/>
<path d="M247 342h8M247 344h8M247 346h8" stroke="#777"/>
<path d="M247 431h8l-4 3z" fill="#666"/>
<text x="7" y="457" style="fill:#1a63b0;text-decoration:underline" textLength="79" lengthAdjust="spacingAndGlyphs">Properties help</text>
<rect x="184.500" y="443.500" width="72" height="20" rx="3" fill="url(#gapply)" stroke="#4a7f9f"/>
<text x="206" y="458" class="d" textLength="31" lengthAdjust="spacingAndGlyphs">Apply</text>
<path d="M199 450v16l3.500-3.500 3 6 2-1-3-6h5z" fill="#fff" stroke="#222"/>

<!-- BROWSER -->
<rect x="0.500" y="478.500" width="263" height="217" fill="#aec5d7" stroke="#7f98aa"/>
<rect x="1" y="479" width="262" height="19" fill="url(#gpt)"/>
<text x="3" y="493" style="fill:#444" textLength="144" lengthAdjust="spacingAndGlyphs">Chapter 5 - Project Browser</text>
<rect x="246.500" y="483.500" width="11" height="11" rx="1" fill="#d4dde4" stroke="#667"/><path d="M249.500 486.500l5 5M254.500 486.500l-5 5" stroke="#445" stroke-width="1.200"/>
<rect x="4" y="499" width="256" height="180" fill="#fff"/>
<path d="M13.500 514V679M33.500 535V679M53.500 554V679M18 509.500h7M38 527.500h12M38 545.500h12M54 563.500h15M54 581.500h15M54 599.500h15M54 617.500h15M54 635.500h15M54 653.500h15M54 671.500h15" stroke="#888" stroke-dasharray="1 1" fill="none"/>
<rect x="9.500" y="505.500" width="7" height="7" fill="#fff" stroke="#888"/><path d="M11 509h4" stroke="#333"/>
<rect x="29.500" y="523.500" width="7" height="7" fill="#fff" stroke="#888"/><path d="M31 527h4M33 525v4" stroke="#333"/>
<rect x="29.500" y="541.500" width="7" height="7" fill="#fff" stroke="#888"/><path d="M31 545h4" stroke="#333"/>
<path d="M26 506v-3h3M37 503h3v3M26 512v3h3M37 515h3v-3" fill="none" stroke="#333"/><path d="M30 514l2-9h5l-2 9z" fill="none" stroke="#333"/>
<text x="47" y="513" class="d" textLength="53" lengthAdjust="spacingAndGlyphs">Views (all)</text>
<text x="51" y="531" class="d" textLength="82" lengthAdjust="spacingAndGlyphs">Structural Plans</text>
<text x="51" y="549" class="d" textLength="58" lengthAdjust="spacingAndGlyphs">Floor Plans</text>
<text x="71" y="567" class="d" textLength="115" lengthAdjust="spacingAndGlyphs">'Typical Elevator Shaft</text>
<text x="71" y="585" class="d" textLength="86" lengthAdjust="spacingAndGlyphs">Corridor Parapet</text>
<rect x="68" y="590" width="43" height="18" fill="#e2e2e2"/>
<text x="71" y="603" class="d" textLength="36" lengthAdjust="spacingAndGlyphs">Level 1</text>
<text x="71" y="621" class="d" textLength="36" lengthAdjust="spacingAndGlyphs">Level 2</text>
<text x="71" y="639" class="d" textLength="36" lengthAdjust="spacingAndGlyphs">Level 3</text>
<text x="71" y="657" class="d" textLength="36" lengthAdjust="spacingAndGlyphs">Level 4</text>
<text x="71" y="675" class="d" textLength="36" lengthAdjust="spacingAndGlyphs">Level 5</text>
<rect x="244" y="499" width="16" height="180" fill="#f3f3f3"/>
<path d="M248.500 511l4-4 4 4z" fill="#666"/>
<rect x="245" y="518" width="13" height="22" rx="2" fill="url(#gbar)" stroke="#a8a8a8"/><path d="M248 526h7M248 529h7M248 532h7" stroke="#666"/>
<path d="M248 669h8l-4 3z" fill="#666"/>
<rect x="4" y="679" width="256" height="15" fill="#f0f0f0"/>
<path d="M15 683v7l-4-3.500z" fill="#555"/>
<rect x="24" y="680" width="198" height="13" rx="1" fill="url(#ghb)" stroke="#aaa"/>
<path d="M120.500 683v6M122.500 683v6M124.500 683v6" stroke="#666"/>
<path d="M234 683v7l4-3.500z" fill="#555"/>

<!-- VIEWPORT -->
<rect x="264" y="173" width="8" height="523" fill="#efefef"/>
<rect x="272" y="173" width="989" height="505" fill="#fff"/>
<rect x="271" y="173" width="2" height="523" fill="#7b7b7b"/>

<!-- walls -->
<path d="M273 173H575V492L273 466Z" fill="url(#gleft)"/>
<path d="M273 173H575V492L273 466Z" fill="url(#brick)"/>
<path d="M575 173H930V495C880 470 810 458 750 458C680 458 610 475 575 492Z" fill="url(#gcurve)"/>
<path d="M575 173H930V495C880 470 810 458 750 458C680 458 610 475 575 492Z" fill="url(#brick2)"/>
<path d="M930 173H1261V552L930 523Z" fill="url(#gright)"/>
<path d="M930 173H1261V552L930 523Z" fill="url(#brick)"/>

<!-- bases -->
<path d="M273 466L575 492V542L273 517Z" fill="#5c5d52"/>
<path d="M273 466L575 492V542L273 517Z" fill="url(#cmu)"/>
<path d="M575 492C610 475 680 458 750 458C810 458 880 470 930 495V540C890 522 830 510 750 509C690 509 650 511 620 520C600 528 585 535 575 542Z" fill="url(#gcbase)"/>
<path d="M575 512C620 490 690 478 750 478C810 478 880 490 930 512M575 528C620 505 690 494 750 494C810 494 880 505 930 526" fill="none" stroke="#000" stroke-opacity=".1"/>
<path d="M930 523L1261 552V601L930 573Z" fill="#4d4d46"/>
<path d="M930 523L1261 552V601L930 573Z" fill="url(#cmu)"/>

<!-- edges -->
<path d="M273 517L575 542C585 535 600 528 620 520C650 511 690 509 750 509C830 510 890 522 928 541" fill="none" stroke="#111" stroke-width="1.200"/>
<path d="M930 573L1261 601" stroke="#111" stroke-width="1.200"/>
<path d="M575.500 173V542" stroke="#0e0608"/>
<path d="M929.500 173V573" stroke="#120a0c" stroke-width="1.200"/>

<!-- bands -->
<path d="M273 380L575 405M273 409L575 434M273 437L575 463M930 434L1261 463M930 465L1261 493M930 493L1261 522" stroke="#0d0507" stroke-width="1.600" fill="none"/>
<path d="M575 405C610 388 680 369 750 369C810 369 880 380 930 405M575 434C610 417 680 399 750 399C810 399 880 411 930 437M575 463C610 446 680 429 750 429C810 429 880 441 930 468" stroke="#0d0507" stroke-width="1.600" fill="none"/>
<path d="M575 409C610 392 680 373 750 373C810 373 880 384 930 409M575 438C610 421 680 403 750 403C810 403 880 415 930 441M575 467C610 450 680 433 750 433C810 433 880 445 930 472" stroke="#0d0507" stroke-width=".7" fill="none" opacity=".8"/>
<!-- ledges -->
<path d="M273 467L575 493M930 524L1261 553" stroke="#0d0a08" stroke-width="2"/>
<path d="M273 465.500L575 491.500M930 522.500L1261 551.500" stroke="#a8a595" stroke-dasharray="14 3"/>
<path d="M575 492C610 475 680 458 750 458C810 458 880 470 930 495" fill="none" stroke="#111" stroke-width="2"/>
<path d="M575 490.500C610 473.500 680 456.500 750 456.500C810 456.500 880 468.500 930 493.500" fill="none" stroke="#c4c2b2" stroke-width="1.200"/>

<!-- windows -->
<use href="#win" transform="translate(339 387) skewY(4.900)"/>
<use href="#win" transform="translate(430 395) skewY(4.900)"/>
<use href="#win" transform="translate(519 402) skewY(4.900)"/>
<path d="M344 425l17-14" stroke="#333" stroke-width=".8"/>
<rect x="273" y="382" width="3" height="82" fill="#5b4a3c"/>
<use href="#win" transform="translate(960 440) skewY(4.900)"/>
<use href="#win" transform="translate(1050 448) skewY(4.900)"/>
<use href="#win" transform="translate(1140 455) skewY(4.900)"/>
<use href="#win" transform="translate(1230 463) skewY(4.900)"/>

<!-- blue windows -->
<path d="M658 414l18-3v86l-18 3z" fill="#1447b4"/><path d="M661 416h6v78h-6z" fill="#d8e2f6"/><path d="M667 415h7v78h-7z" fill="#2f4f96"/>
<rect x="752" y="407" width="20" height="87" fill="#1447b4"/><rect x="754" y="410" width="16" height="77" fill="#d2daef"/>
<path d="M845 413l17 3v87l-17-3z" fill="#1447b4"/><path d="M848 417l6 1v79l-6-1z" fill="#7d9ad8"/><path d="M856 418l4 1v76l-4-1z" fill="#dce4f6"/>
<path d="M913 432l9 3v88l-9-3z" fill="#1447b4"/><path d="M919 438h2v78h-2z" fill="#6f90d8"/>

<!-- view cube -->
<path d="M1175 250L1187 244L1217 246L1209 252Z" fill="#8f8485"/>
<path d="M1175 250L1209 252L1210 288L1176 285Z" fill="#7b7071"/>
<path d="M1209 252L1217 246V275L1210 288Z" fill="#8d8283"/>
<ellipse cx="1198" cy="287" rx="45" ry="13" fill="none" stroke="#6f6266" stroke-width="4.500"/>
<path d="M1175 250L1209 252L1210 288L1176 285Z" fill="#7b7071"/>
<text x="1183" y="272" style="font-size:9px;fill:#5d5253">LEFT</text>
<path d="M1153 279h9M1174 299h12M1234 287h10" stroke="#b8b0b0" stroke-width="1.500"/>
<rect x="1211" y="187" width="11" height="3" fill="#d4d0d0"/>
<rect x="1229" y="184" width="8" height="8" fill="none" stroke="#d4d0d0" stroke-width="1.500"/><path d="M1232 184v-2h7v7h-2" stroke="#d4d0d0" fill="none"/>
<path d="M1247 183l8 8M1255 183l-8 8" stroke="#e0dcdc" stroke-width="2.400"/>
<!-- nav bar -->
<rect x="1227" y="324" width="32" height="114" rx="3" fill="#67575d"/>
<path d="M1250 329l4 4M1254 329l-4 4" stroke="#e8e4e4"/>
<rect x="1233" y="344" width="20" height="20" rx="7" fill="#a8a3a3"/><circle cx="1243" cy="354" r="6" fill="#8a8585" stroke="#d8d4d4" stroke-width="1.200"/>
<path d="M1230 380h28" stroke="#4d4046"/>
<rect x="1236" y="390" width="9" height="10" fill="#6f9a5e"/><circle cx="1245.500" cy="399.500" r="2.500" fill="#c8c8c8"/>
<path d="M1250 430h6M1251 432.500h4M1252 435h2" stroke="#ddd"/>

<!-- right scrollbar -->
<rect x="1261" y="173" width="19" height="523" fill="#f0f0f0"/>
<path d="M1266 183l4-4 4 4z" fill="#555"/>
<rect x="1263" y="418" width="14" height="15" rx="1" fill="url(#gbar)" stroke="#aaa"/>

<!-- view bar -->
<rect x="273" y="678" width="1007" height="18" fill="#f0f0f0"/>
<text x="283" y="690" class="d" textLength="56" lengthAdjust="spacingAndGlyphs">1/8" = 1'-0"</text>
<rect x="352" y="680" width="14" height="10" fill="#fff" stroke="#333"/><rect x="355" y="683" width="8" height="4" fill="#888"/>
<path d="M374 684l3-3h10v7l-3 2h-10z" fill="#5ab4d8" stroke="#2a6f98"/><path d="M374 686h10" stroke="#3a9a3a"/>
<circle cx="399" cy="684" r="3.500" fill="#f2b93a"/><path d="M399 678v2M393 684h2M395 680l1 1M403 680l-1 1" stroke="#d8982a"/><path d="M400 686l5 5M405 686l-5 5" stroke="#cc3344" stroke-width="1.500"/>
<circle cx="421" cy="684" r="4" fill="none" stroke="#2a78b8"/><path d="M416 690h8" stroke="#2a78b8"/><path d="M423 687l4 4M427 687l-4 4" stroke="#cc3344" stroke-width="1.500"/>
<path d="M436 686l5-5 6 3v4h-7z" fill="#f0f0f0" stroke="#666"/><circle cx="447" cy="688" r="2.500" fill="#fff" stroke="#2a78b8"/>
<path d="M457 690v-7h10v7" fill="none" stroke="#2a78b8" stroke-width="1.200"/><path d="M464 686l4 4M468 686l-4 4" stroke="#cc3344" stroke-width="1.500"/>
<path d="M479 690v-7h8v7" fill="none" stroke="#2a78b8" stroke-width="1.200"/><circle cx="490" cy="686" r="2.500" fill="#fff" stroke="#2a78b8"/>
<path d="M499 686a6 6 0 1 1 11 3" fill="#eee" stroke="#444"/><rect x="506" y="686" width="6" height="5" fill="#fff" stroke="#3a8a3a"/>
<path d="M519 684l4 3 5-4 4 3-4 3-5-2-4 1" fill="none" stroke="#444"/><path d="M528 680l4 4" stroke="#444"/>
<circle cx="547" cy="684" r="3" fill="#d8ecf8" stroke="#2a78b8"/><path d="M546 688h2v2h-2z" fill="#2a78b8"/>
<path d="M563 683l10-3v9h-10zM566 682v8M569 681v8M563 686h10" fill="#f0f0f0" stroke="#a0303a"/>
<path d="M592 683v7l-4-3.500z" fill="#555"/>
<rect x="913.500" y="679" width="14" height="13" rx="1" fill="url(#ghb)" stroke="#aaa"/>
<path d="M1250 683v7l4-3.500z" fill="#555"/>

<!-- STATUS BAR -->
<rect x="0" y="696" width="1280" height="24" fill="url(#gst)"/>
<path d="M0 696H1280" stroke="#666"/>
<text x="3" y="713" class="d" textLength="328" lengthAdjust="spacingAndGlyphs">Walls : Basic Wall : Exterior - Brick and CMU on MTL. Stud : R54</text>
<rect x="364" y="705" width="7" height="12" rx="2" fill="#3a78b8"/><rect x="372" y="701" width="6" height="10" rx="2" fill="#6ab04a"/><path d="M373 711v6" stroke="#555" stroke-width="2"/>
<rect x="388" y="700" width="207" height="20" fill="#fff"/>
<path d="M582 708h7l-3.500 4z" fill="#aaa"/>
<path d="M602 702h9v4l-6 5-1 7h-3l1-9 5-3h-5z" fill="#aaa"/>
<text x="620" y="713" class="d" style="font-size:11px">:0</text>
<rect x="655" y="701" width="14" height="16" fill="#f4f4f4" stroke="#333"/><path d="M658 705h8M658 708h8M658 711h8M658 714h8" stroke="#333"/>
<rect x="679" y="701" width="15" height="16" fill="#aaa"/><path d="M681 709h8M686 706l3 3-3 3" stroke="#eee" fill="none"/>
<rect x="700" y="700" width="158" height="20" fill="#fff"/>
<text x="706" y="713" style="fill:#777" textLength="64" lengthAdjust="spacingAndGlyphs">Main Model</text>
<path d="M847 708h7l-3.500 4z" fill="#aaa"/>
<rect x="1085.500" y="702.500" width="12" height="14" fill="#f4f4f4" stroke="#333"/><path d="M1088 708l3 4 4-6" stroke="#3a9a3a" stroke-width="2" fill="none"/>
<text x="1102" y="713" class="d" textLength="67" lengthAdjust="spacingAndGlyphs">Press &amp; Drag</text>
<path d="M1199 703l4 8 3-8" stroke="#555" fill="none"/>
<text x="1199" y="716" class="d" style="font-size:11px">0 :4</text>
<text x="1088" y="711" style="font-size:25px;font-weight:bold;fill:#fff;fill-opacity:.8;stroke:#777;stroke-opacity:.35;stroke-width:.6" textLength="184" lengthAdjust="spacingAndGlyphs">video2brain.com</text>
</svg>
</body></html>
